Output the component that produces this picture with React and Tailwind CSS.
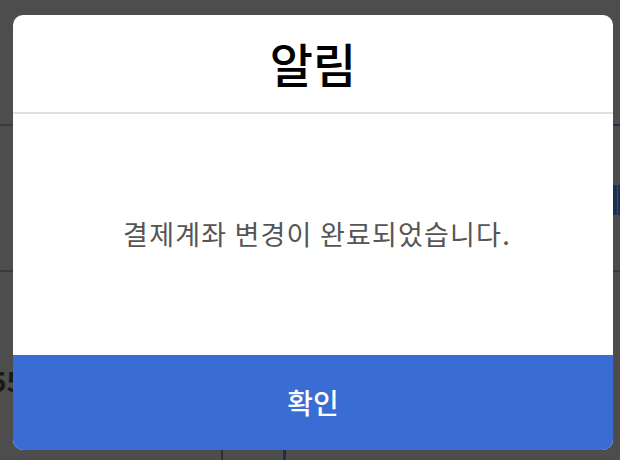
import React from "react";

const font = "font-['Noto_Sans_CJK_KR','Noto_Sans',sans-serif]";

function DimmedPage() {
  return (
    <div className="flex h-full flex-col">
      {/* top strip */}
      <div className="flex h-[126px]">
        <div className="flex-1 border-b-2 border-[#3a3a3a]" />
        <div className="w-[7px] border-b-2 border-[#1f2d4f]" />
      </div>
      {/* middle strip */}
      <div className="flex h-[146px] justify-end gap-[1px] border-b-2 border-[#3a3a3a] pt-[59px]">
        <div className="h-[30px] w-[4px] bg-[#1f2d4f]" />
        <div className="h-[30px] w-[2px] bg-[#1f2d4f]" />
      </div>
      {/* lower strip */}
      <div className="flex flex-1 flex-col">
        <div className="-ml-[10px] mt-[92px] text-[28px] font-bold leading-[32px] text-[#1a1a1a]">
          55
        </div>
        <div className="mt-auto flex h-[24px]">
          <div className="ml-[221px] w-[2px] bg-[#2f2f2f]" />
          <div className="ml-[60px] w-[3px] bg-[#1f2d4f]" />
        </div>
      </div>
    </div>
  );
}

export default function App() {
  return (
    <div className={`relative h-[460px] w-[620px] overflow-hidden bg-[#4d4d4d] ${font}`}>
      <DimmedPage />

      {/* Alert dialog */}
      <div className="absolute left-[13px] top-[15px] flex h-[435px] w-[600px] flex-col overflow-hidden rounded-[10px] bg-white">
        <div className="flex h-[99px] items-center justify-center border-b-2 border-[#e0e0e0]">
          <h2 className="-mt-[3px] text-[47px] font-medium leading-none text-black">알림</h2>
        </div>
        <div className="flex flex-1 items-center justify-center pl-[8px]">
          <p className="-mt-[2px] text-[27px] leading-none tracking-[1.2px] text-[#555555]">
            결제계좌 변경이 완료되었습니다.
          </p>
        </div>
        <button className="flex h-[95px] items-center justify-center bg-[#396dd3] pb-[2px] text-[28px] font-medium text-white">
          확인
        </button>
      </div>
    </div>
  );
}
